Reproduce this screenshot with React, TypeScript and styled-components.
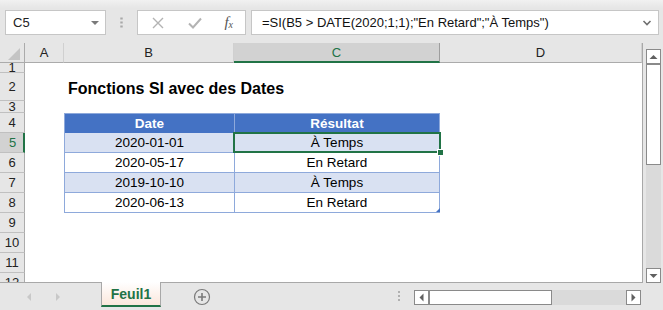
import styled, { createGlobalStyle } from "styled-components";

const GREEN = "#217346";

const GlobalStyle = createGlobalStyle`
  html, body {
    margin: 0;
    padding: 0;
  }
  body {
    width: 663px;
    height: 310px;
    overflow: hidden;
    background: linear-gradient(#f1f1f1, #e6e6e6 8px);
    font-family: "Liberation Sans", Arial, sans-serif;
  }
`;

const columns = [
  { key: "A", width: 39 },
  { key: "B", width: 170 },
  { key: "C", width: 206 },
  { key: "D", width: 202 },
];

type TableRow = { date: string; result: string };

const data: TableRow[] = [
  { date: "2020-01-01", result: "À Temps" },
  { date: "2020-05-17", result: "En Retard" },
  { date: "2019-10-10", result: "À Temps" },
  { date: "2020-06-13", result: "En Retard" },
];

const rowHeights: Record<number, number> = { 1: 10, 2: 28, 3: 12 };

export default function App() {
  const rows = Array.from({ length: 12 }, (_, i) => i + 1);

  const renderCells = (row: number) => {
    if (row === 2) {
      return (
        <>
          <Cell $width={39} />
          <TitleCell $width={170}>Fonctions SI avec des Dates</TitleCell>
          <Cell $width={206} />
          <Cell $width={202} />
        </>
      );
    }
    if (row === 4) {
      return (
        <>
          <Cell $width={39} />
          <TableHead $width={170} $first>
            Date
          </TableHead>
          <TableHead $width={206}>Résultat</TableHead>
          <Cell $width={202} />
        </>
      );
    }
    if (row >= 5 && row <= 8) {
      const item = data[row - 5];
      const banded = row % 2 === 1;
      return (
        <>
          <Cell $width={39} />
          <TableCell $width={170} $banded={banded} $first>
            {item.date}
          </TableCell>
          <TableCell $width={206} $banded={banded}>
            {item.result}
          </TableCell>
          <Cell $width={202} />
        </>
      );
    }
    return columns.map((c) => <Cell key={c.key} $width={c.width} />);
  };

  return (
    <Window>
      <GlobalStyle />
      <TopBar>
        <NameBox>
          <span>C5</span>
          <Caret />
        </NameBox>
        <Grip />
        <FxBox>
          <svg width="14" height="14" viewBox="0 0 14 14">
            <path d="M2 2 L12 12 M12 2 L2 12" stroke="#b3b3b3" strokeWidth="1.4" />
          </svg>
          <svg width="16" height="14" viewBox="0 0 16 14">
            <path d="M2 7.5 L6 11.5 L14 2.5" stroke="#b3b3b3" strokeWidth="2" fill="none" />
          </svg>
          <Fx>
            f<sub>x</sub>
          </Fx>
        </FxBox>
        <FormulaInput>
          <span>=SI(B5 &gt; DATE(2020;1;1);"En Retard";"À Temps")</span>
          <svg width="10" height="8" viewBox="0 0 10 8">
            <path d="M1.5 2 L5 5.5 L8.5 2" stroke="#707070" strokeWidth="1.6" fill="none" />
          </svg>
        </FormulaInput>
      </TopBar>

      <Main>
        <Grid>
          <HeaderRow>
            <Corner>
              <svg width="14" height="14" viewBox="0 0 14 14">
                <path d="M13 1 L13 13 L1 13 Z" fill="#c4c4c4" />
              </svg>
            </Corner>
            {columns.map((c) => (
              <ColHeader key={c.key} $width={c.width} $selected={c.key === "C"}>
                {c.key}
              </ColHeader>
            ))}
          </HeaderRow>
          {rows.map((r) => (
            <SheetRow key={r} $height={rowHeights[r] ?? 20}>
              <RowHeader $selected={r === 5}>
                <span>{r}</span>
              </RowHeader>
              {renderCells(r)}
            </SheetRow>
          ))}
          <Selection />
          <FillHandle />
          <ResizeMark />
        </Grid>
        <VScroll>
          <ScrollButton>
            <svg width="9" height="6" viewBox="0 0 9 6">
              <path d="M0.5 5 L4.5 1 L8.5 5 Z" fill="#606060" />
            </svg>
          </ScrollButton>
          <VThumb />
          <VTrack />
          <ScrollButton>
            <svg width="9" height="6" viewBox="0 0 9 6">
              <path d="M0.5 1 L4.5 5 L8.5 1 Z" fill="#606060" />
            </svg>
          </ScrollButton>
        </VScroll>
      </Main>

      <TabBar>
        <TabNav>
          <svg width="6" height="10" viewBox="0 0 6 10">
            <path d="M5 1 L1 5 L5 9 Z" fill="#c8c8c8" />
          </svg>
          <svg width="6" height="10" viewBox="0 0 6 10">
            <path d="M1 1 L5 5 L1 9 Z" fill="#c8c8c8" />
          </svg>
        </TabNav>
        <SheetTab>Feuil1</SheetTab>
        <AddSheet>
          <svg width="18" height="18" viewBox="0 0 18 18">
            <circle cx="9" cy="9" r="7.5" stroke="#7a7a7a" strokeWidth="1.2" fill="none" />
            <path d="M9 5 V13 M5 9 H13" stroke="#7a7a7a" strokeWidth="1.6" />
          </svg>
        </AddSheet>
        <BarGrip />
        <HScroll>
          <HButton>
            <svg width="5" height="9" viewBox="0 0 5 9">
              <path d="M4.5 0.5 L0.5 4.5 L4.5 8.5 Z" fill="#606060" />
            </svg>
          </HButton>
          <HThumb />
          <HTrack />
          <HButton>
            <svg width="5" height="9" viewBox="0 0 5 9">
              <path d="M0.5 0.5 L4.5 4.5 L0.5 8.5 Z" fill="#606060" />
            </svg>
          </HButton>
        </HScroll>
      </TabBar>
    </Window>
  );
}

const Window = styled.div`
  width: 663px;
  height: 310px;
  display: flex;
  flex-direction: column;
`;

const TopBar = styled.div`
  height: 43px;
  box-sizing: border-box;
  padding: 10px 4px 0 5px;
  display: flex;
  align-items: flex-start;
`;

const NameBox = styled.div`
  width: 101px;
  height: 25px;
  box-sizing: border-box;
  background: #fff;
  border: 1px solid #c6c6c6;
  display: flex;
  align-items: center;
  justify-content: space-between;
  padding: 0 6px 0 7px;
  font-size: 13px;
  color: #222;
`;

const Caret = styled.div`
  width: 0;
  height: 0;
  border-left: 4px solid transparent;
  border-right: 4px solid transparent;
  border-top: 4px solid #7a7a7a;
`;

const Grip = styled.div`
  width: 31px;
  height: 25px;
  background: radial-gradient(circle, #a8a8a8 1px, transparent 1.4px);
  background-size: 3px 4px;
  background-position: center;
  background-repeat: repeat-y;
  background-clip: content-box;
  padding: 7px 0;
  box-sizing: border-box;
`;

const FxBox = styled.div`
  width: 109px;
  height: 25px;
  box-sizing: border-box;
  background: #fff;
  border: 1px solid #c6c6c6;
  display: flex;
  align-items: center;
  justify-content: space-between;
  padding: 0 12px 0 13px;
  margin-right: 5px;
`;

const Fx = styled.span`
  font-family: "Liberation Serif", "Times New Roman", serif;
  font-style: italic;
  font-size: 15px;
  color: #555;
  line-height: 1;

  sub {
    font-size: 10px;
    vertical-align: -1px;
  }
`;

const FormulaInput = styled.div`
  width: 408px;
  height: 25px;
  box-sizing: border-box;
  background: #fff;
  border: 1px solid #c6c6c6;
  display: flex;
  align-items: center;
  justify-content: space-between;
  padding: 0 6px 0 10px;
  font-size: 13px;
  color: #111;
  white-space: nowrap;
`;

const Main = styled.div`
  height: 240px;
  display: flex;
`;

const Grid = styled.div`
  position: relative;
  width: 643px;
  height: 240px;
  box-sizing: border-box;
  border-right: 1px solid #a8a8a8;
  border-bottom: 1px solid #a8a8a8;
  overflow: hidden;
  display: flex;
  flex-direction: column;
  font-family: "Liberation Sans", Arial, sans-serif;
`;

const HeaderRow = styled.div`
  display: flex;
  height: 20px;
  flex-shrink: 0;
`;

const Corner = styled.div`
  width: 25px;
  box-sizing: border-box;
  border-right: 1px solid #ababab;
  border-bottom: 1px solid #ababab;
  display: flex;
  align-items: flex-end;
  justify-content: flex-end;
  padding: 0 3px 1px 0;
`;

const ColHeader = styled.div<{ $width: number; $selected?: boolean }>`
  width: ${(p) => p.$width}px;
  box-sizing: border-box;
  display: flex;
  align-items: center;
  justify-content: center;
  font-size: 13px;
  color: ${(p) => (p.$selected ? GREEN : "#222")};
  background: ${(p) => (p.$selected ? "#d2d2d2" : "transparent")};
  border-right: 1px solid ${(p) => (p.$selected ? "#9e9e9e" : "#d0d0d0")};
  border-bottom: ${(p) => (p.$selected ? `2px solid ${GREEN}` : "1px solid #ababab")};
`;

const SheetRow = styled.div<{ $height: number }>`
  display: flex;
  height: ${(p) => p.$height}px;
  flex-shrink: 0;
`;

const RowHeader = styled.div<{ $selected?: boolean }>`
  width: 25px;
  flex-shrink: 0;
  box-sizing: border-box;
  background: ${(p) => (p.$selected ? "#d2d2d2" : "#e6e6e6")};
  border-right: ${(p) => (p.$selected ? `2px solid ${GREEN}` : "1px solid #ababab")};
  border-bottom: 1px solid #c0c0c0;
  color: ${(p) => (p.$selected ? GREEN : "#222")};
  font-size: 13px;
  display: flex;
  align-items: center;
  justify-content: center;
  overflow: hidden;
  line-height: 1;

  span {
    display: block;
    margin-left: ${(p) => (p.$selected ? "2px" : "0")};
  }
`;

const Cell = styled.div<{ $width: number }>`
  width: ${(p) => p.$width}px;
  flex-shrink: 0;
  box-sizing: border-box;
  background: #fff;
`;

const TitleCell = styled(Cell)`
  position: relative;
  z-index: 1;
  white-space: nowrap;
  overflow: visible;
  font-weight: bold;
  font-size: 16px;
  color: #000;
  display: flex;
  align-items: flex-end;
  padding: 0 0 3px 4px;
`;

const TableHead = styled(Cell)<{ $first?: boolean }>`
  background: #4472c4;
  color: #fff;
  font-weight: bold;
  font-size: 13.5px;
  display: flex;
  align-items: center;
  justify-content: center;
  border-left: 1px solid #8ea9db;
  border-right: ${(p) => (p.$first ? "none" : "1px solid #8ea9db")};
  border-top: 1px solid #8ea9db;
`;

const TableCell = styled(Cell)<{ $banded: boolean; $first?: boolean }>`
  background: ${(p) => (p.$banded ? "#d9e1f2" : "#fff")};
  color: #000;
  font-size: 13.5px;
  display: flex;
  align-items: center;
  justify-content: center;
  border-left: 1px solid #8ea9db;
  border-right: ${(p) => (p.$first ? "none" : "1px solid #8ea9db")};
  border-bottom: 1px solid #8ea9db;
`;

const Selection = styled.div`
  position: absolute;
  left: 233px;
  top: 89px;
  width: 208px;
  height: 21px;
  box-sizing: border-box;
  border: 2px solid ${GREEN};
  pointer-events: none;
`;

const FillHandle = styled.div`
  position: absolute;
  left: 437px;
  top: 106px;
  width: 5px;
  height: 5px;
  background: ${GREEN};
  border: 1px solid #fff;
`;

const ResizeMark = styled.div`
  position: absolute;
  left: 436px;
  top: 165px;
  width: 0;
  height: 0;
  border-left: 4px solid transparent;
  border-bottom: 4px solid #4472c4;
`;

const VScroll = styled.div`
  width: 15px;
  margin: 6px 0 0 3px;
  display: flex;
  flex-direction: column;
`;

const ScrollButton = styled.div`
  height: 15px;
  flex-shrink: 0;
  box-sizing: border-box;
  background: #fff;
  border: 1px solid #8a8a8a;
  display: flex;
  align-items: center;
  justify-content: center;
`;

const VThumb = styled.div`
  height: 102px;
  box-sizing: border-box;
  background: #fff;
  border: 1px solid #8a8a8a;
  border-top-width: 2px;
  margin-top: -1px;
`;

const VTrack = styled.div`
  flex: 1;
  background: #dadada;
`;

const TabBar = styled.div`
  flex: 1;
  display: flex;
  align-items: stretch;
  position: relative;
`;

const TabNav = styled.div`
  width: 101px;
  display: flex;
  align-items: center;
  gap: 23px;
  padding-left: 26px;
  box-sizing: border-box;
`;

const SheetTab = styled.div`
  width: 60px;
  height: 25px;
  margin-top: -1px;
  box-sizing: border-box;
  background: linear-gradient(#ffffff, #fbe7dc);
  border-left: 1px solid #a8a8a8;
  border-right: 1px solid #a8a8a8;
  border-bottom: 2px solid ${GREEN};
  color: ${GREEN};
  font-weight: bold;
  font-size: 14px;
  display: flex;
  align-items: center;
  justify-content: center;
`;

const AddSheet = styled.div`
  width: 82px;
  display: flex;
  align-items: center;
  justify-content: center;
`;

const BarGrip = styled.div`
  width: 171px;
  display: flex;
  align-items: center;
  justify-content: flex-end;
  padding-right: 14px;
  box-sizing: border-box;

  &::after {
    content: "";
    width: 2px;
    height: 12px;
    background: repeating-linear-gradient(#b0b0b0 0 2px, transparent 2px 4px);
  }
`;

const HScroll = styled.div`
  width: 227px;
  height: 15px;
  margin-top: 7px;
  display: flex;
`;

const HButton = styled.div`
  width: 15px;
  flex-shrink: 0;
  box-sizing: border-box;
  background: #fff;
  border: 1px solid #8a8a8a;
  display: flex;
  align-items: center;
  justify-content: center;
`;

const HThumb = styled.div`
  width: 124px;
  box-sizing: border-box;
  background: #fff;
  border: 1px solid #8a8a8a;
  border-left-width: 2px;
  margin-left: -1px;
`;

const HTrack = styled.div`
  flex: 1;
  background: #dadada;
`;
